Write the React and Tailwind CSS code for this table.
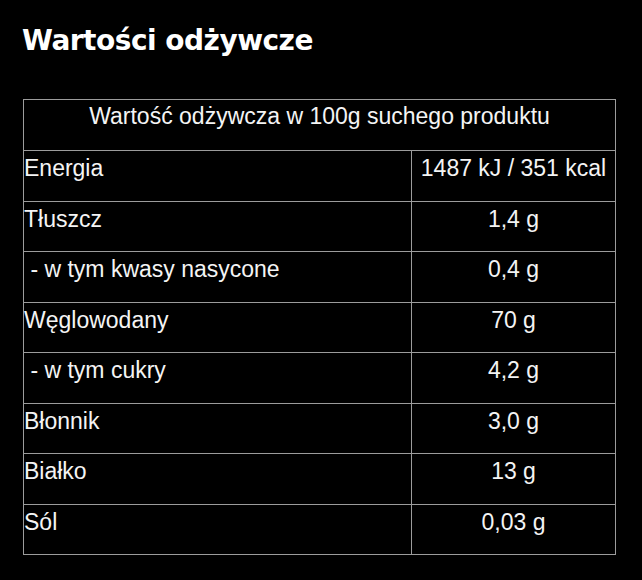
import React from "react";

const rows = [
  ["Energia", "1487 kJ / 351 kcal"],
  ["Tłuszcz", "1,4 g"],
  ["\u00a0- w tym kwasy nasycone", "0,4 g"],
  ["Węglowodany", "70 g"],
  ["\u00a0- w tym cukry", "4,2 g"],
  ["Błonnik", "3,0 g"],
  ["Białko", "13 g"],
  ["Sól", "0,03 g"],
];

export default function App() {
  return (
    <div className="w-[642px] h-[580px] bg-black text-white overflow-hidden">
      <h1
        className="pl-[22px] pt-[27px] text-[28px] leading-[28px] font-bold tracking-[-0.5px] text-white"
        style={{ fontFamily: '"DejaVu Sans", Verdana, sans-serif' }}
      >
        Wartości odżywcze
      </h1>
      <table
        className="ml-[23px] mt-[44px] w-[592px] table-fixed border-collapse text-[23px] leading-[26px] text-[#f4f4f4]"
        style={{ fontFamily: '"Liberation Sans", Arial, sans-serif' }}
      >
        <colgroup>
          <col className="w-[388px]" />
          <col className="w-[204px]" />
        </colgroup>
        <tbody>
          <tr>
            <td
              colSpan={2}
              className="h-[51px] border border-[#9c9c9c] pt-[3px] text-center align-top"
            >
              Wartość odżywcza w 100g suchego produktu
            </td>
          </tr>
          {rows.map(([label, value]) => (
            <tr key={label}>
              <td className="h-[50.5px] border border-[#9c9c9c] pt-[4px] pl-0 align-top whitespace-pre">
                {label}
              </td>
              <td className="h-[50.5px] border border-[#9c9c9c] pt-[4px] text-center align-top">
                {value}
              </td>
            </tr>
          ))}
        </tbody>
      </table>
    </div>
  );
}
